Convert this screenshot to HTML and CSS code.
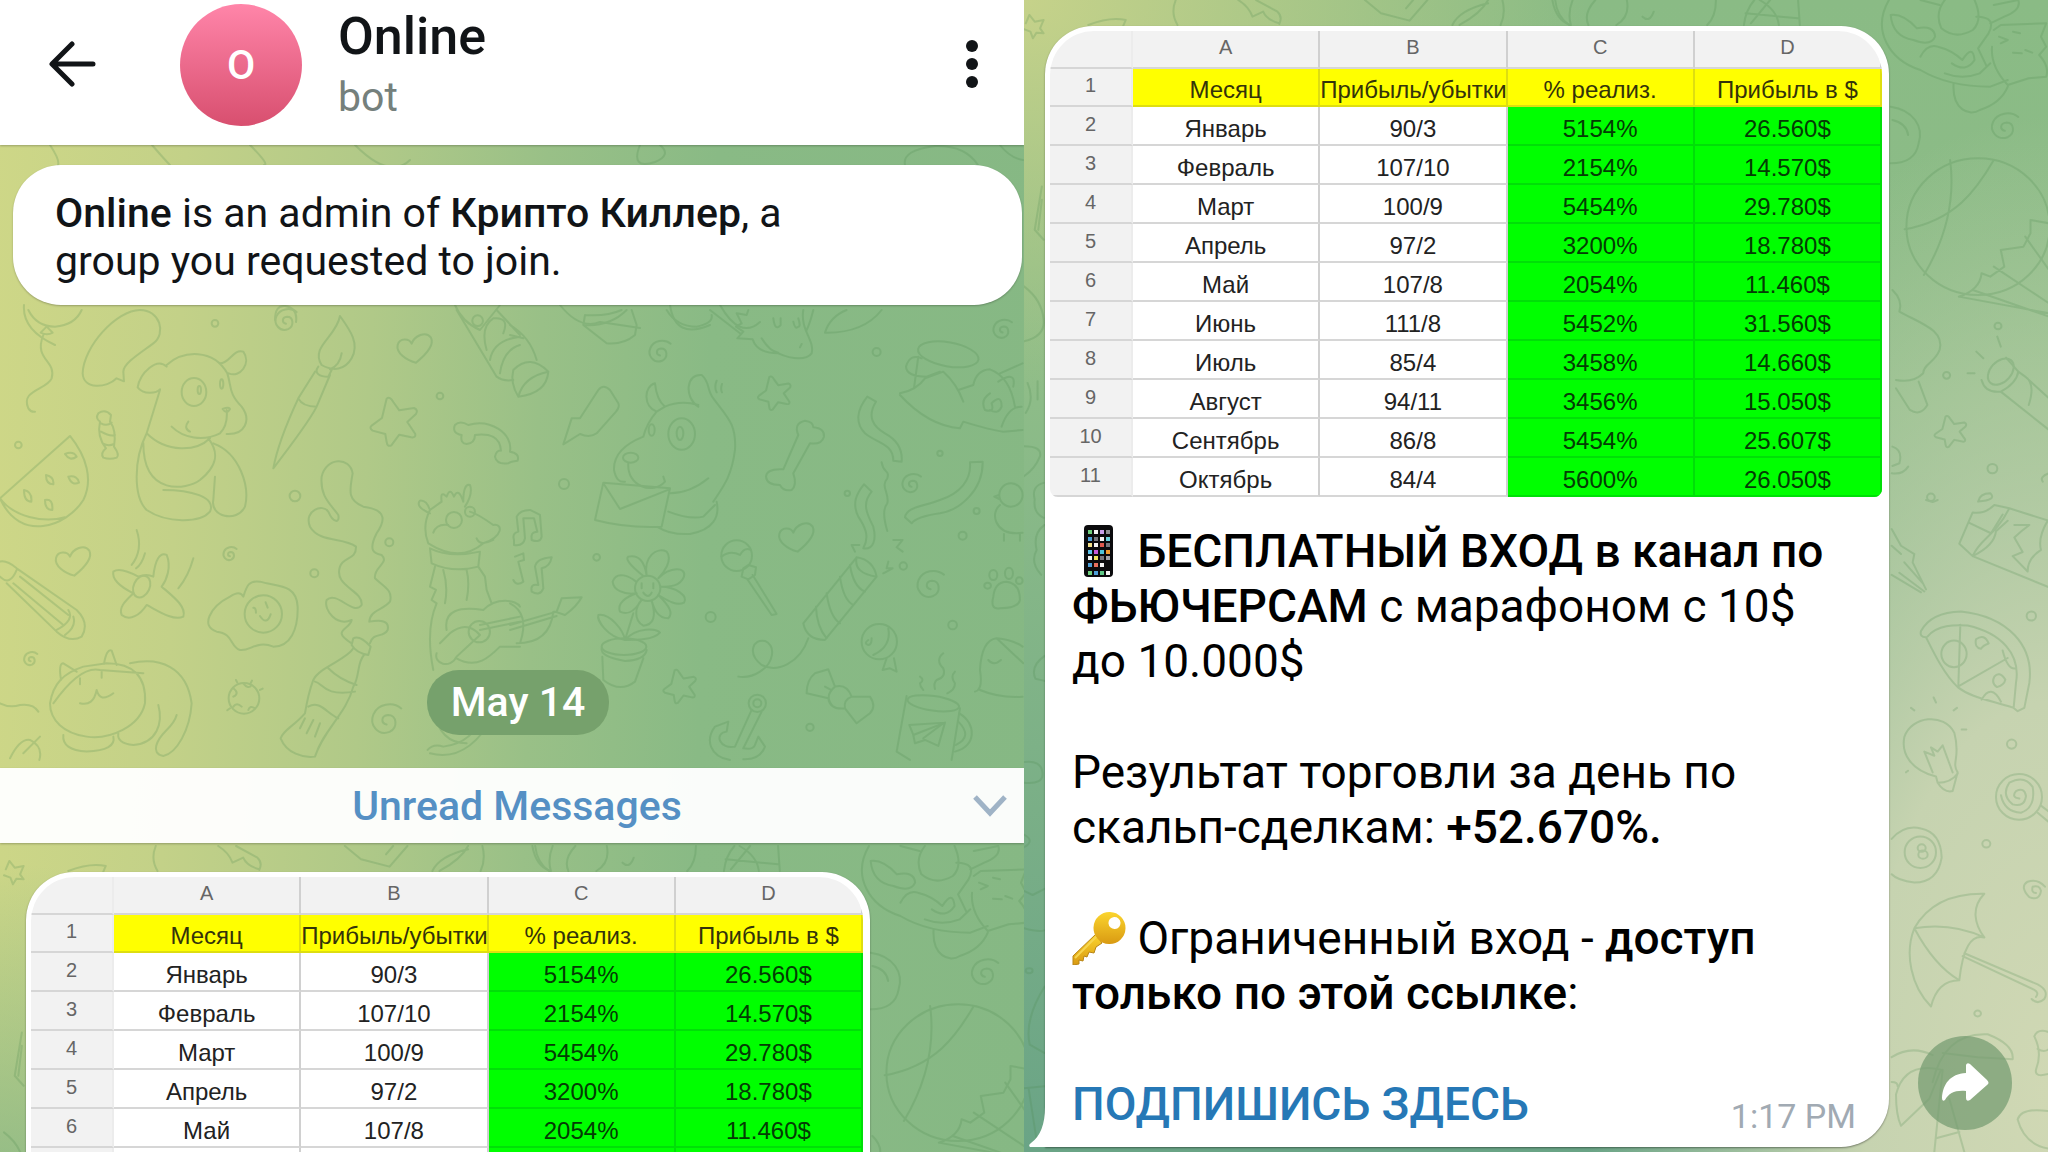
FILE: index.html
```html
<!DOCTYPE html>
<html lang="ru">
<head>
    <meta charset="UTF-8">
    <meta name="viewport" content="width=device-width, initial-scale=1.0">
    <title>Online</title>
    <link rel="stylesheet" href="styles.css">
</head>
<body>

<section class="chat chat-left">
    <svg class="doodles" viewBox="0 0 1024 1152" preserveAspectRatio="xMinYMin slice" aria-hidden="true">
        <defs>
            <path id="swirl" d="M0 4C-8 2 -8 -8 2 -9C14 -9 16 8 4 14C-12 20 -24 4 -18 -10C-12 -24 8 -28 20 -18"/>
            <path id="heart" d="M5 45C-25 38 -55 15 -50 -8C-44 -30 -15 -28 -8 -12C0 -35 35 -52 50 -30C62 -5 30 25 5 45Z"/>
            <path id="star" d="M-20 -70Q-10 -78 0 -60L18 -35L62 -42Q76 -36 68 -24L42 0L66 36Q68 48 54 46L18 38L-6 70Q-18 76 -20 60L-24 36L-62 26Q-74 18 -64 10L-34 -12Z"/>
        </defs>

        <!-- верхняя полоса -->
        <g>
            <path d="M50 145Q60 160 58 165M152 145Q165 160 170 165M250 145Q270 165 264 165M355 145Q390 180 410 160M640 145Q630 170 655 162Q672 155 660 145M905 165Q902 150 935 146Q965 145 978 165M1000 145Q1010 158 1023 160"/>
            <path d="M24 305Q22 330 55 345M275 320Q275 305 285 306Q298 308 296 322M455 305Q462 322 480 330L500 305M560 305Q580 330 600 322L640 328M670 305Q675 340 710 325M720 305Q740 340 760 322"/>
        </g>

        <!-- левая часть узора -->
        <g transform="translate(0 310) scale(.3333)">
            <path d="M85 0Q110 50 165 50Q225 45 245 0M140 50l-18 18q20 10 36 0zM130 75C100 150 170 150 155 205C140 240 60 240 85 295q8 12 20 10"/>
            <path d="M248 190C250 110 350 0 420 0C480 0 500 70 460 100C420 130 370 160 370 185L372 214L350 205C320 235 250 240 248 190Z"/>
            <path d="M500 165C550 120 640 115 682 190C695 230 685 250 725 290C755 330 735 375 680 372M500 170C470 140 420 190 413 232C430 255 470 250 480 238M660 160C690 160 700 115 730 125C755 160 720 205 686 190M480 240L440 370C400 450 400 560 440 600C500 640 600 640 630 605C650 560 570 540 490 540M440 370C500 430 590 425 630 385M430 400C430 560 560 540 600 510C650 470 660 430 625 385M640 400C720 430 750 530 735 590C710 640 630 620 640 570L645 500M515 350C550 385 610 395 660 370C680 350 682 320 680 300M565 335Q550 355 570 365M668 297q20-8 22 0q-10 18-22 0z"/>
            <ellipse cx="582" cy="246" rx="37" ry="42"/>
            <ellipse cx="598" cy="240" rx="5" ry="12"/>
            <ellipse cx="665" cy="222" rx="5" ry="14"/>
            <path d="M1020 18C1050 60 1080 100 1055 145C1035 180 1000 185 965 165C930 110 1010 80 1020 18ZM955 170C940 190 960 200 985 200L995 180M945 185L895 265C860 340 830 420 820 475C870 410 930 330 950 290L990 195M895 265C905 285 925 290 950 290M1025 130Q1020 165 990 178"/>
            <use href="#heart" x="1243" y="113"/>
            <use href="#heart" x="218" y="752"/>
            <use href="#star" x="1180" y="336"/>
            <use href="#swirl" transform="translate(858 35) scale(1.6)"/>
            <use href="#swirl" x="690" y="735"/>
            <use href="#swirl" x="92" y="1050"/>
            <use href="#swirl" transform="translate(1160 1235) scale(2.2)"/>
            <path d="M295 310Q315 295 333 315L330 335Q350 360 342 410Q360 435 350 443Q330 450 310 443Q300 430 318 415Q290 380 300 335Q285 325 295 310ZM303 340Q320 350 335 338M303 365Q330 380 345 375M308 400Q325 410 342 402"/>
            <path d="M0 565L210 378C260 440 280 510 250 570C200 650 60 700 0 565C40 620 130 640 195 622"/>
            <path d="M195 432q25-10 35 8q-20 15-35-8zM138 495q25 5 22 28q-22 0-22-28zM205 500q28-5 32 18q-22 10-32-18zM72 540q25 5 22 35q-22 0-22-35zM135 570q25-5 22 30q-22 0-22-30z"/>
            <path d="M0 755Q20 750 50 775L230 900Q270 940 245 980Q210 1000 170 965L20 820M0 800Q30 830 50 780M60 800L205 915M40 820L190 945M205 900Q225 930 170 960M220 920Q230 950 195 975"/>
            <path d="M340 785Q360 770 415 800Q440 790 460 800C465 750 480 725 500 735C515 770 500 810 485 830C520 860 560 890 550 920C520 935 470 900 440 885C420 915 390 935 365 915C355 890 380 870 400 850C360 830 335 810 340 785ZM410 660Q430 720 395 765M435 730Q425 765 408 775M580 745Q565 800 535 835"/>
            <ellipse cx="425" cy="830" rx="24" ry="34" transform="rotate(25 425 830)"/>
            <path d="M730 860C740 830 745 810 780 815C830 830 890 820 893 890C895 960 870 1010 820 1010C770 990 750 1025 720 1020C690 1010 700 970 650 965C600 950 630 890 690 860Q720 840 730 860ZM760 893q8 0 8 15M797 877l6 16M780 918q20 30 32-5"/>
            <circle cx="790" cy="912" r="56"/>
            <path d="M1055 1000C990 960 1050 960 1055 930C1010 950 970 900 980 870C1010 840 1060 920 1085 885C1090 840 1000 830 1020 770C1030 740 1070 750 1068 710C1030 680 960 700 930 650C910 600 970 580 985 605C1000 640 1020 640 1015 615C990 580 960 560 965 500C980 440 1050 440 1058 490C1050 540 1040 570 1090 590C1170 600 1150 640 1130 670C1105 720 1120 730 1145 735C1170 760 1120 770 1125 805C1150 830 1180 840 1170 875C1150 900 1110 900 1108 935C1140 930 1170 930 1163 960C1150 985 1120 965 1110 1000"/>
            <path d="M1060 985Q1080 975 1112 1010L1105 1035Q1070 1030 1055 1005ZM1060 1015C1040 1050 960 1070 940 1110C925 1150 920 1180 915 1210C880 1250 850 1260 842 1285C860 1330 910 1345 945 1340C970 1260 1040 1210 1060 1130C1080 1100 1070 1060 1092 1035M985 1075Q1020 1110 1070 1125M945 1115C970 1120 970 1160 1065 1145M925 1190C960 1170 980 1210 1015 1225M915 1225l-15 30M940 1230l-20 40M960 1240l-15 40"/>
            <path d="M150 1180C160 1120 190 1090 250 1070L320 1060C400 1060 440 1100 435 1180C420 1250 330 1290 260 1280C190 1270 150 1230 150 1180ZM183 1110Q175 1060 190 1060L230 1085M312 1062Q320 1015 335 1022L350 1065M390 1060C480 1040 560 1070 575 1180C570 1260 530 1330 490 1338C450 1330 470 1290 500 1260Q525 1235 530 1215M190 1275Q185 1320 260 1325Q350 1320 340 1280M355 1270Q350 1300 400 1305C470 1300 490 1240 475 1185M160 1180C210 1110 260 1070 300 1080L430 1090M240 1180Q280 1190 290 1140Q300 1180 340 1150M240 1105v18M305 1085v18"/>
            <circle cx="732" cy="1165" r="46"/>
            <path d="M700 1135q20 15 0 25M730 1120q15 20 25 5M700 1190q10-15 25 0M745 1200q5-15 20-5M712 1118l-4-8M780 1140l8-4M690 1195l-8 6M752 1120l4-8"/>
            <path d="M1365 345Q1380 330 1405 345C1470 325 1540 370 1530 425Q1560 430 1553 452Q1530 455 1525 460Q1490 465 1485 440Q1490 420 1503 422C1500 380 1470 370 1425 375Q1425 400 1400 402Q1380 400 1385 375Q1355 370 1365 345ZM1370 0L1490 200Q1510 215 1540 210M1490 0L1560 75M1460 120Q1440 50 1480 25Q1530 20 1510 70M1470 150Q1480 90 1560 80M1500 190Q1510 120 1560 105"/>
            <path d="M1290 600Q1265 650 1285 700Q1380 760 1450 700C1510 680 1510 640 1480 645Q1430 610 1410 605M1290 610Q1245 590 1260 572Q1280 570 1290 600L1325 575Q1320 540 1340 560Q1350 530 1362 560Q1375 530 1390 575Q1390 520 1410 525Q1420 550 1395 590M1300 668Q1310 640 1345 645M1430 685Q1440 710 1480 690M1290 715Q1350 745 1440 725L1435 770Q1360 790 1295 760ZM1330 780Q1345 830 1335 880M1400 780Q1410 820 1400 870M1305 770L1290 830L1308 840L1295 870L1310 880C1280 950 1290 1030 1300 1080M1435 770L1455 800L1460 840L1475 880M1340 960C1330 900 1380 890 1450 900C1490 860 1550 870 1560 890M1310 1030C1300 1060 1350 1080 1370 1040L1440 975Q1400 930 1350 970L1320 1000M1370 1045C1430 1080 1470 1040 1500 1010L1560 1010M1440 945L1560 920M1440 960L1560 935"/>
            <circle cx="1362" cy="630" r="24"/>
            <circle cx="1438" cy="965" r="32"/>
            <circle cx="1410" cy="605" r="15"/>
            <circle cx="645" cy="40" r="10"/>
            <circle cx="55" cy="405" r="10"/>
            <circle cx="885" cy="558" r="16"/>
            <circle cx="1320" cy="258" r="10"/>
            <circle cx="1168" cy="697" r="12"/>
            <circle cx="943" cy="790" r="12"/>
            <circle cx="1433" cy="32" r="16"/>
            <path d="M0 1180Q30 1195 60 1185Q100 1180 115 1205M30 1345Q60 1285 90 1290Q130 1310 118 1350M70 1330L120 1280M1283 1320Q1300 1300 1330 1310Q1420 1300 1450 1210M1300 1200Q1320 1300 1400 1300M1290 1330Q1400 1360 1480 1220"/>
        </g>

        <!-- правая часть узора -->
        <g transform="translate(510 310) scale(.3333)">
            <path d="M0 45Q60 80 80 150M10 180Q60 130 115 185Q110 250 25 260Q0 220 10 180ZM25 260Q40 200 115 185M0 75L40 85"/>
            <path d="M225 15L220 45L290 100Q340 105 375 75L380 45L365 0M225 15Q290 20 335 0M222 45Q300 50 350 0"/>
            <path d="M470 0Q500 50 560 50Q610 40 605 15M600 0L690 70M715 0L710 15L680 10L695 40L678 50L700 65L682 85L728 88C740 125 780 130 805 130C850 150 890 150 905 130C915 90 870 60 880 0M755 85Q780 125 805 128M790 25q5 40 22 20v-20M850 35q5 25 15 15q8 0 0-25M870 112l5-10M910 0Q900 40 890 60M945 68Q960 20 1010 0M945 68Q1060 70 1115 0"/>
            <use href="#swirl" transform="translate(450 130) scale(1.6)"/>
            <use href="#swirl" transform="translate(1478 62) scale(1.4)"/>
            <use href="#swirl" transform="translate(1205 525) scale(1.4)"/>
            <use href="#swirl" transform="translate(1262 830) scale(2)"/>
            <path d="M160 403L185 325L210 325L265 240Q280 220 300 240L325 280Q330 290 318 305L260 370Q240 385 210 372Z"/>
            <path d="M440 305C400 290 400 230 435 220Q440 270 465 290ZM465 290C500 275 530 275 565 285M565 290C520 260 530 190 575 195C600 215 590 240 610 265C650 320 680 340 675 420C665 500 640 530 610 575M440 305Q410 340 400 380C350 400 310 430 312 480Q320 520 345 515M355 460C350 530 430 555 465 515L460 500M480 550Q540 550 595 505M620 575C630 620 610 660 540 672Q480 675 445 652M475 605Q540 630 580 620L615 585"/>
            <ellipse cx="515" cy="372" rx="40" ry="47"/>
            <ellipse cx="510" cy="370" rx="10" ry="20"/>
            <ellipse cx="425" cy="360" rx="9" ry="17"/>
            <ellipse cx="362" cy="443" rx="23" ry="15"/>
            <path d="M280 518L480 535L455 650Q350 655 255 630ZM280 520L330 597L478 538M620 212q-8 20 0 35M636 222q-5 15 0 25"/>
            <use href="#star" transform="translate(792 250) scale(.7)"/>
            <use href="#star" transform="translate(508 1130) scale(.7)"/>
            <use href="#heart" x="858" y="680"/>
            <path d="M865 375Q850 340 885 332Q910 335 910 352Q945 355 942 380Q935 405 900 400L850 490Q862 525 845 540Q820 545 810 525Q770 525 768 500Q770 475 820 478Z"/>
            <path d="M1072 260L1098 275C1070 320 1090 350 1125 370Q1180 400 1175 455L1150 452C1150 400 1100 400 1065 370C1035 340 1040 300 1072 260ZM1062 523L1085 545C1055 580 1070 610 1090 650C1100 690 1090 720 1060 715C1080 680 1065 650 1045 620C1025 580 1040 550 1062 523ZM1380 457L1418 455C1420 540 1350 600 1290 610Q1220 620 1205 640L1185 622C1190 590 1240 590 1290 570C1350 550 1385 510 1380 457ZM1115 457C1120 490 1140 480 1132 505C1110 530 1140 550 1132 580C1115 600 1125 640 1132 663"/>
            <ellipse cx="1315" cy="133" rx="92" ry="36" transform="rotate(10 1315 133)"/>
            <path d="M1225 140L1212 235M1235 145Q1200 130 1188 170Q1190 200 1250 200L1290 185M1170 250Q1220 240 1245 205L1300 185Q1340 220 1360 275M1170 255C1230 320 1290 350 1350 355L1360 335Q1440 360 1480 365L1538 360M1345 240L1390 225Q1400 180 1440 178Q1500 200 1515 290M1470 190L1538 160M1465 215Q1520 180 1510 230M1440 250q-30 20-15 50q30 10 20-20q30-30 30 10q-10 25-35 10M1475 350q20-60 60-60"/>
            <circle cx="1503" cy="555" r="35"/>
            <path d="M1467 555L1453 560L1468 567M1470 585C1440 610 1455 670 1520 670L1538 668M1482 672V692M1530 672V692"/>
            <path d="M12 690Q5 670 25 665L20 620Q30 600 60 600L90 615L95 680Q90 700 65 690Q60 665 82 665L72 625L40 625L45 685Q40 710 12 705ZM15 740L40 730L42 750L25 755L40 815Q20 830 10 810M75 770Q80 745 125 742Q120 770 95 775L100 835Q90 860 65 845Q60 820 85 825Z"/>
            <path d="M0 945L140 905L155 865L215 862Q200 890 165 915L135 905M0 960L140 918M20 1000Q120 1000 130 905M0 880Q60 910 30 1000"/>
            <circle cx="413" cy="835" r="38"/>
            <path d="M400 798Q340 750 355 740Q400 730 410 797C400 740 440 710 470 725C490 750 460 790 445 805C480 770 530 770 522 800C510 830 480 830 452 830C500 830 535 860 522 878C500 890 470 870 445 855C480 890 490 910 475 925C440 925 430 890 425 872C440 920 430 945 400 947C370 930 375 890 395 870C370 910 350 915 330 905C320 880 350 860 380 850C340 855 310 840 308 815C320 780 360 800 378 815M395 820v15M430 820v15M400 848q15 20 25 0M370 910L345 990M345 990C290 980 260 930 265 915C300 910 340 960 345 990C380 950 440 955 450 968C430 990 380 990 345 990"/>
            <ellipse cx="342" cy="1010" rx="67" ry="25"/>
            <path d="M275 1015Q270 1040 345 1053Q405 1050 410 1020M277 1040L280 1110Q330 1150 375 1115L400 1045"/>
            <circle cx="680" cy="737" r="46"/>
            <path d="M635 740Q660 720 690 735Q705 710 722 720M700 775L715 765L738 772L735 795L715 808L695 800ZM712 808L785 915L800 912L728 795"/>
            <path d="M1040 742Q1090 750 1100 800L945 990Q890 990 880 940ZM1040 742Q1030 790 1100 800M990 800Q1000 870 1030 885M1020 765Q1030 830 1065 845M950 850Q960 920 990 940M918 890Q920 950 950 985M895 985C870 1060 800 1090 755 1065C710 1030 730 985 765 993C800 1010 790 1060 750 1085Q720 1105 685 1100M1048 705L1025 705L1035 725M1150 690H1178L1160 712L1178 725M1135 755L1130 775L1148 775L1120 790"/>
            <circle cx="1108" cy="995" r="53"/>
            <path d="M1135 955Q1145 1010 1090 1035M1075 990q-15 10 0 15q10 0 10-20M1130 1045L1118 1080L1140 1075L1160 1085L1152 1045"/>
            <path d="M1470 895Q1440 900 1450 860Q1455 815 1490 815Q1530 820 1530 870Q1525 895 1470 895Z"/>
            <ellipse cx="1450" cy="795" rx="12" ry="15"/>
            <ellipse cx="1497" cy="790" rx="12" ry="17"/>
            <ellipse cx="1433" cy="827" rx="10" ry="9"/>
            <ellipse cx="1528" cy="812" rx="10" ry="10"/>
            <path d="M1395 1145Q1420 1140 1410 1080Q1415 990 1460 985Q1510 990 1538 1010M1410 1140Q1470 1165 1538 1160M1435 1050q15 20 38 0M1460 985L1540 1060"/>
            <path d="M890 1150Q890 1110 915 1090L955 1078L975 1130Q1010 1120 1025 1160L1080 1160Q1100 1190 1080 1210L1040 1240L1005 1195Q960 1200 955 1165ZM975 1130Q940 1160 970 1190M1025 1160Q1000 1170 1005 1195M945 1130l18 10"/>
            <circle cx="742" cy="1180" r="26"/>
            <circle cx="742" cy="1180" r="12"/>
            <path d="M725 1200L675 1310M755 1205L700 1315M675 1310C630 1320 610 1270 650 1265L655 1235L615 1250C585 1290 600 1340 660 1350M700 1315Q730 1320 735 1305L745 1280L765 1310Q750 1350 700 1348"/>
            <path d="M1190 1158L1160 1325L1200 1350M1350 1195L1325 1350"/>
            <ellipse cx="1270" cy="1180" rx="78" ry="22" transform="rotate(8 1270 1180)"/>
            <path d="M1348 1210C1400 1240 1400 1310 1335 1325M1345 1235Q1390 1280 1338 1305M1198 1245L1305 1238L1285 1308L1245 1290L1215 1300L1210 1275ZM1305 1238L1210 1275M1240 1285L1300 1240M1230 1100Q1245 1110 1230 1120Q1230 1130 1240 1140M1300 1030Q1275 1050 1300 1075Q1310 1100 1280 1110Q1270 1120 1275 1137M1335 1085Q1320 1100 1335 1120Q1335 1140 1312 1150"/>
            <circle cx="1100" cy="126" r="12"/>
            <circle cx="162" cy="522" r="15"/>
            <circle cx="1290" cy="430" r="8"/>
            <circle cx="1012" cy="550" r="8"/>
            <circle cx="1400" cy="603" r="9"/>
            <circle cx="1358" cy="677" r="12"/>
            <circle cx="1180" cy="768" r="11"/>
            <circle cx="260" cy="742" r="10"/>
            <circle cx="602" cy="921" r="15"/>
            <circle cx="1328" cy="945" r="13"/>
            <circle cx="900" cy="1252" r="11"/>
        </g>

        <use href="#side-doodles" x="4" y="846"/>
    </svg>

    <header class="chat-header">
        <button class="icon-button back" type="button" aria-label="Back">
            <svg width="48" height="46" viewBox="0 0 48 46"><path d="M24 3L4 23L24 43M5 23H45"/></svg>
        </button>
        <div class="avatar">O</div>
        <div class="chat-info">
            <h1>Online</h1>
            <p>bot</p>
        </div>
        <button class="icon-button menu" type="button" aria-label="Menu">
            <svg width="14" height="50" viewBox="0 0 14 50"><circle cx="7" cy="7" r="6"/><circle cx="7" cy="25" r="6"/><circle cx="7" cy="43" r="6"/></svg>
        </button>
    </header>

    <div class="notice"><b>Online</b> is an admin of <b>Крипто Киллер</b>, a<br>group you requested to join.</div>

    <div class="date">May 14</div>

    <div class="unread">
        <span>Unread Messages</span>
        <svg width="36" height="24" viewBox="0 0 36 24"><path d="M3 3L18 19L33 3"/></svg>
    </div>

    <article class="message">
        <table class="sheet">
            <thead>
                <tr><th></th><th>A</th><th>B</th><th>C</th><th>D</th></tr>
            </thead>
            <tbody>
                <tr class="titles"><th>1</th><td>Месяц</td><td>Прибыль/убытки</td><td>% реализ.</td><td>Прибыль в $</td></tr>
                <tr><th>2</th><td>Январь</td><td>90/3</td><td>5154%</td><td>26.560$</td></tr>
                <tr><th>3</th><td>Февраль</td><td>107/10</td><td>2154%</td><td>14.570$</td></tr>
                <tr><th>4</th><td>Март</td><td>100/9</td><td>5454%</td><td>29.780$</td></tr>
                <tr><th>5</th><td>Апрель</td><td>97/2</td><td>3200%</td><td>18.780$</td></tr>
                <tr><th>6</th><td>Май</td><td>107/8</td><td>2054%</td><td>11.460$</td></tr>
                <tr><th></th><td></td><td></td><td></td><td></td></tr>
                <tr><th></th><td></td><td></td><td></td><td></td></tr>
            </tbody>
        </table>
    </article>
</section>

<section class="chat chat-right">
    <svg class="doodles" viewBox="0 0 1024 1152" preserveAspectRatio="xMinYMin slice" aria-hidden="true">
        <g id="side-doodles">
            <!-- над сообщением -->
            <g transform="translate(0 0) scale(.357 .333)">
                <path d="M5 70L15 45L30 65L55 60L45 85L55 100L35 98L25 115L18 95L0 88M180 75Q240 50 285 60L278 78M425 0Q410 40 430 75M600 0Q630 20 640 50L670 35Q680 60 715 70M650 0L710 35Q725 50 715 72M955 0L1000 40L1080 62L1130 0M1070 25L1090 0M1200 75Q1220 30 1300 10M1220 75Q1280 40 1300 0M1340 0Q1350 40 1335 75M1480 0Q1490 60 1530 75"/>
            </g>
            <!-- слева от сообщения -->
            <g transform="scale(.357 .333)">
                <path d="M50 560L30 690L55 720M50 600L40 690M0 860Q50 900 55 960Q60 1010 0 1025M10 1150Q30 1200 5 1240M38 1145V1200M0 1340Q50 1340 45 1370Q30 1410 0 1430M55 1450Q20 1460 30 1500Q25 1540 55 1555"/>
            </g>
            <g transform="translate(0 500) scale(.574 .4158)">
                <path d="M36 60Q15 80 22 120Q10 150 30 180M36 375Q10 400 20 430L36 435M0 630Q30 625 32 655Q35 685 0 680M0 805Q20 820 0 835M0 940L15 950L36 935M0 1030Q25 1040 36 1035M36 1170Q0 1250 10 1310L36 1330M0 1415L36 1410M8 1415L22 1540"/>
                <circle cx="9" cy="1132" r="6"/>
            </g>
            <!-- справа от сообщения -->
            <g transform="translate(477 0) scale(.3495 .3333)">
                <path d="M155 0Q160 50 195 75M205 0Q190 40 200 75M270 0Q235 40 250 75M360 0Q370 50 330 75M615 0Q615 50 590 75M405 50q20 20 32-15M695 75Q700 30 725 0M850 0L855 75M700 40L850 55M740 0Q790 30 795 75M715 70L770 0"/>
                <path d="M1110 0C1060 90 1110 180 1200 210Q1280 260 1400 260L1450 240M1115 45Q1150 40 1190 85Q1240 75 1242 110Q1230 140 1180 120Q1120 110 1115 45ZM1200 0L1255 15M1355 0Q1380 60 1350 90Q1300 120 1260 85Q1240 40 1270 0M1360 50Q1420 50 1395 100L1365 145L1390 200M1410 15L1480 0Q1490 30 1440 50L1400 70M1200 170Q1220 130 1250 140Q1290 150 1320 180Q1350 130 1355 180Q1330 220 1290 190M1270 220Q1320 240 1370 220L1400 190M1410 90L1430 75L1560 70L1545 110L1560 140L1540 165Q1570 200 1560 230L1510 235L1450 255Q1400 200 1405 140M1425 110L1450 120L1430 130M1465 95L1485 100M1465 158L1490 160M1500 150L1520 158M1295 250C1290 330 1340 350 1370 330Q1430 310 1450 260"/>
                <path d="M1115 320C1180 330 1210 380 1195 430Q1185 490 1115 490M1120 360Q1160 370 1165 405"/>
                <use href="#swirl" transform="translate(1442 385) scale(1.9)"/>
                <circle cx="1365" cy="680" r="205"/>
                <path d="M1285 480C1300 600 1270 720 1210 825M1410 480C1360 570 1300 660 1155 688M1310 890Q1370 870 1375 820L1400 830L1440 800L1430 750L1495 740L1515 700L1515 660L1568 670M1350 870L1568 950M1410 800L1568 910M1500 710L1568 810M1310 890L1568 940"/>
                <path d="M1120 870Q1150 900 1140 935C1200 970 1270 990 1255 1050C1240 1090 1210 1090 1208 1120Q1180 1150 1130 1140M1130 1165L1170 1230Q1200 1250 1220 1215L1195 1145"/>
                <circle cx="1422" cy="978" r="10"/>
                <circle cx="1275" cy="1126" r="10"/>
                <circle cx="1406" cy="1406" r="14"/>
                <circle cx="1230" cy="1492" r="11"/>
                <ellipse cx="1430" cy="1115" rx="30" ry="45" transform="rotate(40 1430 1115)"/>
                <path d="M1375 1140Q1385 1180 1430 1175L1568 1290M1445 1073L1480 1115L1500 1130L1568 1195M1480 1115Q1475 1150 1430 1175M1500 1130Q1530 1150 1510 1215M1420 1010L1430 1040M1360 1055L1380 1075M1335 1120H1355"/>
                <use href="#star" transform="translate(1285 1295) scale(.65)"/>
                <path d="M1120 1340Q1150 1350 1140 1390L1120 1398M1165 1400Q1150 1425 1118 1420M1365 1505Q1370 1480 1400 1480Q1420 1500 1365 1505ZM1568 1420Q1540 1430 1550 1445"/>
            </g>
            <g transform="translate(837 500) scale(.3333 .4158)">
                <path d="M295 105L335 30Q370 35 400 12L445 20L564 50M335 135L564 210M295 105L335 135C360 90 400 90 445 20M325 55L390 80L425 35M460 60L505 60Q480 75 460 90L485 125L455 135L500 172Q500 140 540 120Q530 90 560 50M335 135Q400 110 405 75L440 50"/>
                <path d="M92 70L120 110L160 130L155 150L195 215M92 180L180 222M115 175L190 220M130 150L185 200M92 110L120 130M195 0L215 5L230 0"/>
                <path d="M180 315Q210 270 300 268C440 280 520 350 505 440L490 500L470 508L458 500C380 480 330 475 290 450C250 420 220 370 195 330Q175 330 180 315ZM200 328C230 300 280 300 320 302C420 320 480 370 465 440L458 500M298 300L292 448L440 380M425 362Q440 410 465 405M362 480Q390 440 420 485M345 335Q370 320 383 345Q365 350 360 358Q340 355 345 335ZM400 425Q415 410 433 432Q430 445 408 450Q390 440 400 425Z"/>
                <ellipse cx="279" cy="370" rx="38" ry="32"/>
                <ellipse cx="511" cy="279" rx="14" ry="11"/>
                <ellipse cx="452" cy="587" rx="14" ry="11"/>
                <ellipse cx="376" cy="827" rx="12" ry="9"/>
                <ellipse cx="350" cy="1235" rx="10" ry="7"/>
                <path d="M225 665C150 650 120 610 130 570C150 520 250 510 280 560C300 620 270 630 290 655L275 700Q250 705 230 680ZM215 655L190 605L220 615L210 595L230 605L245 590L275 655M230 680Q270 680 290 658M218 475L225 487M150 500l10 6M288 500l-10 6M302 552h14M135 655l6-4"/>
                <ellipse cx="474" cy="714" rx="69" ry="55"/>
                <path d="M475 718Q450 715 465 700Q490 690 495 712Q490 740 455 732Q420 710 445 680Q490 660 515 690Q525 740 480 752Q430 750 420 710M540 735L564 750M530 752L564 775"/>
                <path d="M92 815Q130 780 180 790Q240 800 242 860Q230 920 160 920Q110 915 92 900"/>
                <ellipse cx="178" cy="847" rx="47" ry="38"/>
                <ellipse cx="182" cy="837" rx="12" ry="9"/>
                <ellipse cx="186" cy="853" rx="14" ry="10"/>
                <path d="M525 945Q510 945 515 930Q535 925 540 940Q535 965 505 955Q475 930 500 918Q530 910 552 930"/>
                <path d="M160 1030Q220 945 370 947C330 980 340 1020 370 1052Q310 1040 295 1155Q230 1155 210 1218C150 1170 130 1090 160 1030ZM160 1030Q270 1015 370 1052M160 1030Q220 1120 295 1155M310 1090L530 1165Q565 1180 550 1200Q530 1215 512 1200M305 1097L520 1178Q535 1185 525 1195"/>
                <path d="M92 1340Q150 1310 215 1335M92 1400Q110 1400 110 1410M215 1400Q250 1280 380 1285Q460 1310 455 1345L350 1340L245 1330M105 1430Q130 1350 240 1370L205 1440L120 1505Q105 1480 105 1430ZM245 1370L220 1568M265 1440L310 1568M225 1535L295 1520M520 1290Q530 1270 564 1280M520 1290Q545 1330 525 1370Q520 1390 564 1380M530 1320Q550 1330 564 1320M470 1490Q480 1460 564 1470M470 1490Q490 1550 564 1560"/>
            </g>
        </g>
    </svg>

    <article class="message message-full">
        <table class="sheet">
            <thead>
                <tr><th></th><th>A</th><th>B</th><th>C</th><th>D</th></tr>
            </thead>
            <tbody>
                <tr class="titles"><th>1</th><td>Месяц</td><td>Прибыль/убытки</td><td>% реализ.</td><td>Прибыль в $</td></tr>
                <tr><th>2</th><td>Январь</td><td>90/3</td><td>5154%</td><td>26.560$</td></tr>
                <tr><th>3</th><td>Февраль</td><td>107/10</td><td>2154%</td><td>14.570$</td></tr>
                <tr><th>4</th><td>Март</td><td>100/9</td><td>5454%</td><td>29.780$</td></tr>
                <tr><th>5</th><td>Апрель</td><td>97/2</td><td>3200%</td><td>18.780$</td></tr>
                <tr><th>6</th><td>Май</td><td>107/8</td><td>2054%</td><td>11.460$</td></tr>
                <tr><th>7</th><td>Июнь</td><td>111/8</td><td>5452%</td><td>31.560$</td></tr>
                <tr><th>8</th><td>Июль</td><td>85/4</td><td>3458%</td><td>14.660$</td></tr>
                <tr><th>9</th><td>Август</td><td>94/11</td><td>3456%</td><td>15.050$</td></tr>
                <tr><th>10</th><td>Сентябрь</td><td>86/8</td><td>5454%</td><td>25.607$</td></tr>
                <tr><th>11</th><td>Октябрь</td><td>84/4</td><td>5600%</td><td>26.050$</td></tr>
            </tbody>
        </table>

        <div class="text">
            <p>
                <svg class="emoji" viewBox="0 0 54 54">
                    <rect x="12" y="1" width="29" height="52" rx="4" fill="#0b0b0d"/>
                    <g stroke-width="4" fill="none">
                        <path d="M16 8h4" stroke="#6fcf7c"/><path d="M22 8h4" stroke="#f4f4f4"/><path d="M28 8h4" stroke="#c9a0ea"/><path d="M34 8h4" stroke="#8f8f94"/>
                        <path d="M16 15h4" stroke="#4d9fd8"/><path d="M22 15h4" stroke="#77777d"/><path d="M28 15h4" stroke="#f4f4f4"/><path d="M34 15h4" stroke="#6ad4e0"/>
                        <path d="M16 21h4" stroke="#f3e08a"/><path d="M22 21h4" stroke="#f4f4f4"/><path d="M28 21h4" stroke="#e05a4e"/><path d="M34 21h4" stroke="#77777d"/>
                        <path d="M16 28h4" stroke="#5cc3ec"/><path d="M22 28h4" stroke="#c65ad8"/><path d="M28 28h4" stroke="#4dc3d8"/><path d="M34 28h4" stroke="#f09a2c"/>
                        <path d="M16 34h4" stroke="#f4f4f4"/><path d="M22 34h4" stroke="#f0e25c"/><path d="M28 34h4" stroke="#77777d"/><path d="M34 34h4" stroke="#a0a0a5"/>
                        <path d="M16 41h4" stroke="#4d9fd8"/><path d="M22 41h4" stroke="#e8705e"/><path d="M28 41h4" stroke="#f4f4f4"/>
                        <path d="M16 49h4" stroke="#6fcf7c"/><path d="M22 49h4" stroke="#4d9fd8"/><path d="M28 49h4" stroke="#5fc987"/><path d="M34 49h4" stroke="#f4f4f4"/>
                    </g>
                </svg>
                <b>БЕСПЛАТНЫЙ ВХОД в канал по<br>ФЬЮЧЕРСАМ</b> с марафоном с 10$<br>до 10.000$
            </p>
            <p>Результат торговли за день по<br>скальп-сделкам: <b>+52.670%.</b></p>
            <p>
                <svg class="emoji" viewBox="0 0 54 54">
                    <defs>
                        <linearGradient id="gold" x1="0" y1="0" x2="0" y2="1"><stop offset="0" stop-color="#fbd52e"/><stop offset="1" stop-color="#d99a12"/></linearGradient>
                    </defs>
                    <path d="M24 23L1 45V54L7 53V49L11 50L12 45L15 46L17 41L22 42L24 36L30 32Z" fill="url(#gold)" stroke="#b98514"/>
                    <path d="M26 24L3 47" stroke="#f7d650" stroke-width="2"/>
                    <path fill-rule="evenodd" d="M38 1A16 16 0 1 1 37 33A16 16 0 0 1 38 1ZM42 6A6 6 0 1 0 43 18A6 6 0 0 0 42 6Z" fill="url(#gold)"/>
                </svg>
                Ограниченный вход - <b>доступ<br>только по этой ссылке</b>:
            </p>
            <div class="bottom">
                <a href="#">ПОДПИШИСЬ ЗДЕСЬ</a>
                <time>1:17 PM</time>
            </div>
        </div>

        <svg class="tail" width="18" height="40" viewBox="0 0 18 40"><path d="M16 0V40H1Q-1 38 2 36Q16 26 16 0Z"/></svg>
    </article>

    <button class="share" type="button" aria-label="Share">
        <svg width="48" height="42" viewBox="0 0 48 42"><path d="M25 3Q26 0 29 2L46 18Q49 21 46 23L29 38Q25 40 25 36V29C14 28 8 31 4 38Q1 40 1 36C2 22 9 12 25 11Z"/></svg>
    </button>
</section>

</body>
</html>
```
FILE: styles.css
```css
* {
    box-sizing: border-box;
}
body {
    margin: 0;
    display: grid;
    grid-template-columns: 1fr 1fr;
    height: 100vh;
    overflow: hidden;
    font-family: Roboto, "Noto Sans", sans-serif;
    color: #111417;
}
b {
    font-weight: 500;
}
.chat {
    position: relative;
    height: 100vh;
    overflow: hidden;
}
.chat-left {
    background:
        radial-gradient(ellipse 40% 30% at 0% 105%, rgba(125, 178, 134, 0.8) 0%, rgba(140, 185, 134, 0) 100%),
        linear-gradient(92deg, #ced787 0%, #c3d188 18%, #b0c988 36%, #99c087 52%, #89ba85 68%, #86b884 100%);
}
.chat-right {
    background:
        radial-gradient(ellipse 55% 35% at 0% 0%, #c6d28a 0%, rgba(190, 208, 138, 0) 100%),
        radial-gradient(ellipse 45% 85% at 100% 95%, #d0d8b4 0%, #c6d3b0 40%, rgba(190, 207, 170, 0) 100%),
        linear-gradient(180deg, #8abb85, #8dbc88 35%, #6aa486);
}
.doodles {
    position: absolute;
    top: 0;
    left: 0;
    width: 100%;
    height: 100%;
    fill: none;
    stroke: #4d8a4f;
    stroke-width: 2;
    stroke-linecap: round;
    stroke-linejoin: round;
    opacity: 0.22;
}
.doodles path,
.doodles circle,
.doodles ellipse {
    vector-effect: non-scaling-stroke;
}

/* Шапка */
.chat-header {
    position: relative;
    display: flex;
    align-items: flex-start;
    height: 145px;
    padding: 4px 42px 0 48px;
    background: #fff;
    box-shadow: 0 1px 2px rgba(0, 0, 0, 0.25);
}
.icon-button {
    padding: 0;
    border: 0;
    background: none;
    cursor: pointer;
}
.icon-button svg {
    display: block;
}
.back {
    margin: 37px 84px 0 0;
}
.back svg {
    fill: none;
    stroke: #111417;
    stroke-width: 5;
    stroke-linecap: round;
    stroke-linejoin: round;
}
.menu {
    margin: 35px 3px 0 auto;
}
.menu svg {
    fill: #111417;
}
.avatar {
    width: 122px;
    height: 122px;
    border-radius: 50%;
    background: linear-gradient(#ff85a9, #d84f6f);
    color: #fff;
    font-size: 41px;
    font-weight: 500;
    line-height: 122px;
    text-align: center;
}
.chat-info {
    margin-left: 36px;
}
.chat-info h1 {
    margin: 0;
    font-size: 52px;
    font-weight: 500;
    line-height: 66px;
}
.chat-info p {
    margin: 0;
    color: #75807c;
    font-size: 41px;
    line-height: 54px;
}

/* Лента */
.notice {
    position: relative;
    margin: 20px 2px 0 13px;
    padding: 24px 42px 20px;
    border-radius: 48px;
    background: #fff;
    box-shadow: 0 1px 2px rgba(0, 0, 0, 0.25);
    font-size: 41px;
    line-height: 48px;
}
.date {
    position: relative;
    width: max-content;
    margin: 365px auto 0;
    padding: 0 24px;
    border-radius: 32px;
    background: #76a16c;
    color: #fff;
    font-size: 41px;
    font-weight: 500;
    line-height: 65px;
    left: 6px;
}
.unread {
    position: relative;
    display: flex;
    align-items: center;
    justify-content: center;
    height: 75px;
    margin-top: 33px;
    padding-left: 10px;
    background: rgba(255, 255, 255, 0.96);
    box-shadow: 0 1px 2px rgba(0, 0, 0, 0.25);
    color: #5590c4;
    font-size: 41px;
    font-weight: 500;
}
.unread svg {
    position: absolute;
    right: 16px;
    fill: none;
    stroke: #9fb3c6;
    stroke-width: 5;
}

/* Сообщение */
.message {
    position: relative;
    width: 844px;
    max-width: 90%;
    margin: 29px 0 0 26px;
    padding: 5px 7px 0 5px;
    border-radius: 48px 48px 48px 0;
    background: #fff;
    box-shadow: 0 1px 2px rgba(0, 0, 0, 0.4);
}
.message-full {
    margin: 26px 0 0 21px;
}
.sheet {
    width: 100%;
    table-layout: fixed;
    border-collapse: separate;
    border-spacing: 0;
    border-radius: 44px 44px 8px 8px;
    overflow: hidden;
    font-family: "Liberation Sans", Arial, sans-serif;
    color: #222;
}
.sheet tr {
    height: 39px;
}
.sheet thead tr,
.sheet .titles {
    height: 38px;
}
.sheet th,
.sheet td {
    padding: 6px 0 0;
    border-right: 2px solid #d0d0d0;
    border-bottom: 2px solid #d6d6d6;
    text-align: center;
    font-size: 24px;
    line-height: 30px;
    white-space: nowrap;
}
.sheet th {
    padding: 0 0 4px;
    background: #f2f2f2;
    color: #666;
    font-size: 20px;
    font-weight: 400;
}
.sheet th:first-child {
    width: 83px;
    border-right-color: #ececec;
}
.sheet td:nth-child(n+4) {
    background: #00ff00;
    border-color: #00df08;
    color: #043c04;
}
.sheet .titles td {
    background: #ffff00;
    border-color: #dede10;
    color: #33330a;
}
.text {
    padding: 27px 0 0 22px;
    color: #000;
    font-size: 46px;
    line-height: 55px;
}
.text p {
    margin: 0 0 56px;
}
.emoji {
    display: inline-block;
    width: 54px;
    height: 54px;
    margin-bottom: -11px;
    vertical-align: baseline;
}
.bottom {
    display: flex;
    align-items: flex-start;
    justify-content: space-between;
    height: 70px;
    padding-right: 26px;
}
.bottom a {
    color: #2678b6;
    font-weight: 500;
    text-decoration: none;
}
.bottom time {
    padding-top: 12px;
    color: #a1aab3;
    font-size: 34px;
}
.tail {
    position: absolute;
    left: -16px;
    bottom: 0;
    fill: #fff;
}
.share {
    position: absolute;
    right: 36px;
    bottom: 22px;
    display: flex;
    align-items: center;
    justify-content: center;
    width: 94px;
    height: 94px;
    padding: 0;
    border: 0;
    border-radius: 50%;
    background: rgba(116, 155, 112, 0.72);
    cursor: pointer;
}
.share svg {
    fill: #fff;
}
```
